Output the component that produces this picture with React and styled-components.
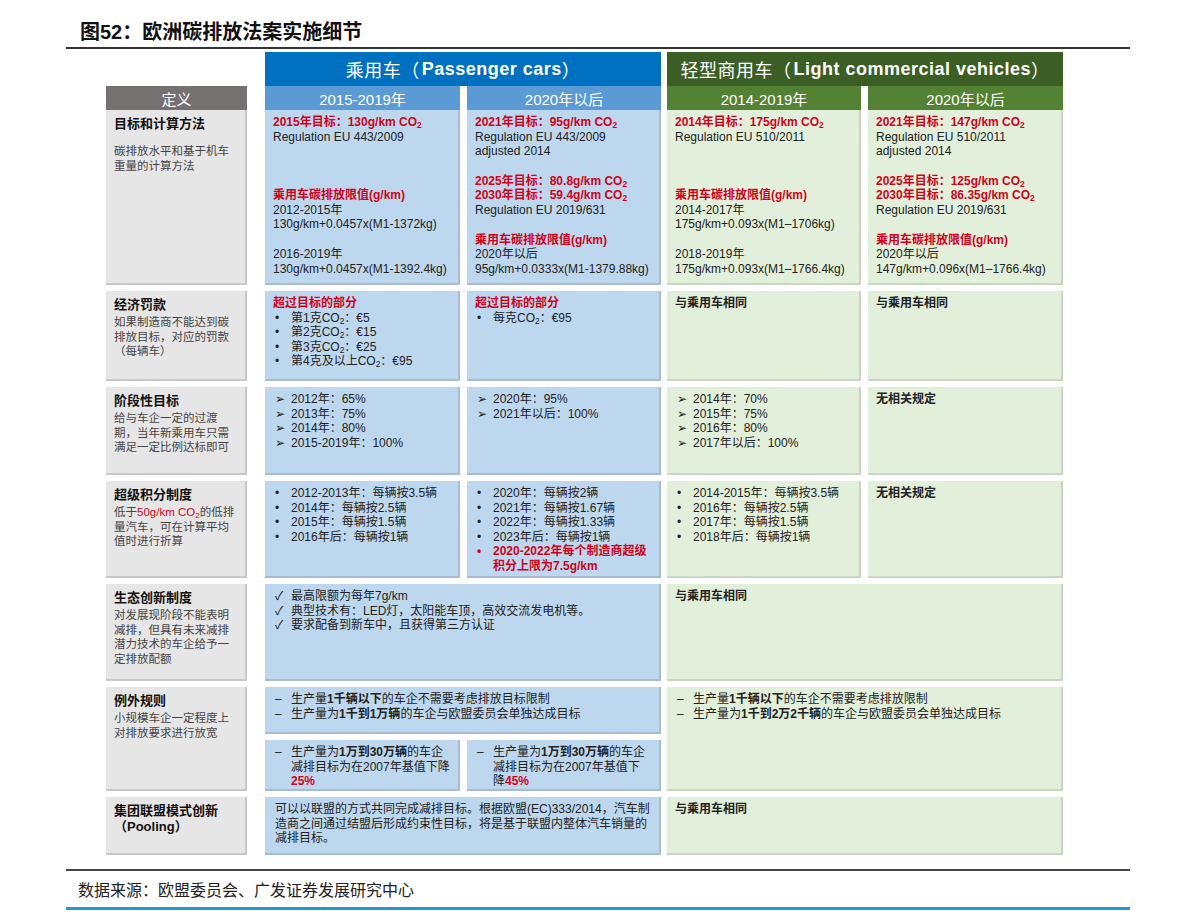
import React from "react";
import styled, { createGlobalStyle } from "styled-components";

const Global = createGlobalStyle`
  body { margin: 0; background: #fff; font-family: "Liberation Sans", "Noto Sans CJK SC", sans-serif; color: #222; }
  sub { font-size: 0.7em; vertical-align: -0.25em; line-height: 0; }
`;

const Page = styled.div`
  width: 1191px; height: 920px; overflow: hidden; position: relative;
`;
const Title = styled.h1`
  margin: 0; padding: 16px 0 0 80px; height: 31px; font-size: 20px; font-weight: bold; color: #111;
  font-family: "Liberation Sans", "Noto Sans CJK SC", sans-serif;
`;
const Rule = styled.div`
  margin: 0 61px 0 66px; height: 2px; background: #333;
`;
const cols = `141px 18px 195px 7px 194px 6px 194px 7px 195px`;
const HeadGrid = styled.div`
  display: grid; margin: 3px 0 0 106px; grid-template-columns: ${cols};
  grid-template-rows: 34px 24px;
`;
const BodyGrid = styled.div`
  display: grid; margin: 0 0 0 106px; grid-template-columns: ${cols};
  grid-template-rows: 175px 90px 88px 97px 97px 47px 51px 58px; row-gap: 6px;
`;
const BigHead = styled.div`
  grid-row: 1; grid-column: ${p => p.$col};
  background: ${p => p.$c}; color: #fff; font-size: 18px;
  display: flex; align-items: center; justify-content: center; letter-spacing: 0.5px;
  b { font-weight: bold; margin-left: 2px; }
`;
const SubHead = styled.div`
  grid-row: 2; grid-column: ${p => p.$col};
  background: ${p => p.$c}; color: #fff; font-size: 15px;
  display: flex; align-items: center; justify-content: center;
`;
const Cell = styled.div`
  grid-row: ${p => p.$row}; grid-column: ${p => p.$col};
  background: ${p => (p.$g ? "#e2efda" : "#bdd7ee")};
  border-right: 2px solid ${p => (p.$g ? "#c9d6c2" : "#a7bcd0")};
  border-bottom: 2px solid ${p => (p.$g ? "#c9d6c2" : "#a7bcd0")};
  padding: 5px 8px 5px ${p => p.$pl || 8}px; font-size: 12px; line-height: 14.6px; box-sizing: border-box;
`;
const Label = styled.div`
  grid-row: ${p => p.$row}; grid-column: 1;
  background: #e7e6e6; border-right: 2px solid #c8c8c8; border-bottom: 2px solid #c8c8c8;
  padding: 6px 8px; font-size: 11.5px; line-height: 14.6px; color: #444; box-sizing: border-box;
`;
const LabelTitle = styled.div`
  font-size: 13px; font-weight: bold; color: #111; margin-bottom: 2px; line-height: 16px;
`;
const Red = styled.span`color: #d0021b; font-weight: ${p => (p.$n ? "normal" : "bold")};`;
const Line = styled.div`min-height: 14.6px;`;
const Gap = styled.div`height: ${p => p.$h}px;`;
const List = styled.ul`margin: 0; padding: 0; list-style: none;`;
const ItemRow = styled.li`
  display: flex; color: ${p => (p.$red ? "#d0021b" : "inherit")}; font-weight: ${p => (p.$red ? "bold" : "normal")};
`;
const Marker = styled.span`width: 16px; flex: none; padding-left: 2px;`;
const ItemText = styled.span`flex: 1; min-width: 0;`;
const Item = ({ m, red, children }) => (
  <ItemRow $red={red}><Marker>{m}</Marker><ItemText>{children}</ItemText></ItemRow>
);
const Footer = styled.div`
  margin: 14px 61px 0 66px; border-top: 2px solid #444; padding: 6px 0 0 12px; font-size: 16px; height: 30px;
`;
const Blue = styled.div`margin: 0 61px 0 66px; height: 3px; background: #1a9ad6;`;

const CO = () => <>CO<sub>2</sub></>;

export default function App() {
  return (
    <Page>
      <Global />
      <Title>图52：欧洲碳排放法案实施细节</Title>
      <Rule />
      <HeadGrid>
        <BigHead $col="3 / 6" $c="#0070c0">乘用车（<b>Passenger cars</b>）</BigHead>
        <BigHead $col="7 / 10" $c="#3b5e24">轻型商用车（<b>Light commercial vehicles</b>）</BigHead>
        <SubHead $col="1" $c="#767171">定义</SubHead>
        <SubHead $col="3" $c="#5b9bd5">2015-2019年</SubHead>
        <SubHead $col="5" $c="#5b9bd5">2020年以后</SubHead>
        <SubHead $col="7" $c="#548235">2014-2019年</SubHead>
        <SubHead $col="9" $c="#548235">2020年以后</SubHead>
      </HeadGrid>
      <BodyGrid>
        <Label $row={1}><LabelTitle>目标和计算方法</LabelTitle><Gap $h={10} />碳排放水平和基于机车重量的计算方法</Label>
        <Cell $row={1} $col={3}>
          <Line><Red>2015年目标：130g/km <CO /></Red></Line>
          <Line>Regulation EU 443/2009</Line>
          <Gap $h={44} />
          <Line><Red>乘用车碳排放限值(g/km)</Red></Line>
          <Line>2012-2015年</Line>
          <Line>130g/km+0.0457x(M1-1372kg)</Line>
          <Gap $h={15} />
          <Line>2016-2019年</Line>
          <Line>130g/km+0.0457x(M1-1392.4kg)</Line>
        </Cell>
        <Cell $row={1} $col={5}>
          <Line><Red>2021年目标：95g/km <CO /></Red></Line>
          <Line>Regulation EU 443/2009</Line>
          <Line>adjusted 2014</Line>
          <Gap $h={15} />
          <Line><Red>2025年目标：80.8g/km <CO /></Red></Line>
          <Line><Red>2030年目标：59.4g/km <CO /></Red></Line>
          <Line>Regulation EU 2019/631</Line>
          <Gap $h={15} />
          <Line><Red>乘用车碳排放限值(g/km)</Red></Line>
          <Line>2020年以后</Line>
          <Line>95g/km+0.0333x(M1-1379.88kg)</Line>
        </Cell>
        <Cell $row={1} $col={7} $g>
          <Line><Red>2014年目标：175g/km <CO /></Red></Line>
          <Line>Regulation EU 510/2011</Line>
          <Gap $h={44} />
          <Line><Red>乘用车碳排放限值(g/km)</Red></Line>
          <Line>2014-2017年</Line>
          <Line>175g/km+0.093x(M1–1706kg)</Line>
          <Gap $h={15} />
          <Line>2018-2019年</Line>
          <Line>175g/km+0.093x(M1–1766.4kg)</Line>
        </Cell>
        <Cell $row={1} $col={9} $g>
          <Line><Red>2021年目标：147g/km <CO /></Red></Line>
          <Line>Regulation EU 510/2011</Line>
          <Line>adjusted 2014</Line>
          <Gap $h={15} />
          <Line><Red>2025年目标：125g/km <CO /></Red></Line>
          <Line><Red>2030年目标：86.35g/km <CO /></Red></Line>
          <Line>Regulation EU 2019/631</Line>
          <Gap $h={15} />
          <Line><Red>乘用车碳排放限值(g/km)</Red></Line>
          <Line>2020年以后</Line>
          <Line>147g/km+0.096x(M1–1766.4kg)</Line>
        </Cell>

        <Label $row={2}><LabelTitle>经济罚款</LabelTitle>如果制造商不能达到碳排放目标，对应的罚款（每辆车）</Label>
        <Cell $row={2} $col={3}>
          <Line><Red>超过目标的部分</Red></Line>
          <List>
            <Item m="•">第1克<CO />：€5</Item>
            <Item m="•">第2克<CO />：€15</Item>
            <Item m="•">第3克<CO />：€25</Item>
            <Item m="•">第4克及以上<CO />：€95</Item>
          </List>
        </Cell>
        <Cell $row={2} $col={5}>
          <Line><Red>超过目标的部分</Red></Line>
          <List><Item m="•">每克<CO />：€95</Item></List>
        </Cell>
        <Cell $row={2} $col={7} $g><b>与乘用车相同</b></Cell>
        <Cell $row={2} $col={9} $g><b>与乘用车相同</b></Cell>

        <Label $row={3}><LabelTitle>阶段性目标</LabelTitle>给与车企一定的过渡期，当年新乘用车只需满足一定比例达标即可</Label>
        <Cell $row={3} $col={3}>
          <List>
            <Item m="➢">2012年：65%</Item>
            <Item m="➢">2013年：75%</Item>
            <Item m="➢">2014年：80%</Item>
            <Item m="➢">2015-2019年：100%</Item>
          </List>
        </Cell>
        <Cell $row={3} $col={5}>
          <List>
            <Item m="➢">2020年：95%</Item>
            <Item m="➢">2021年以后：100%</Item>
          </List>
        </Cell>
        <Cell $row={3} $col={7} $g>
          <List>
            <Item m="➢">2014年：70%</Item>
            <Item m="➢">2015年：75%</Item>
            <Item m="➢">2016年：80%</Item>
            <Item m="➢">2017年以后：100%</Item>
          </List>
        </Cell>
        <Cell $row={3} $col={9} $g><b>无相关规定</b></Cell>

        <Label $row={4}><LabelTitle>超级积分制度</LabelTitle>低于<Red $n>50g/km CO<sub>2</sub></Red>的低排量汽车，可在计算平均值时进行折算</Label>
        <Cell $row={4} $col={3}>
          <List>
            <Item m="•">2012-2013年：每辆按3.5辆</Item>
            <Item m="•">2014年：每辆按2.5辆</Item>
            <Item m="•">2015年：每辆按1.5辆</Item>
            <Item m="•">2016年后：每辆按1辆</Item>
          </List>
        </Cell>
        <Cell $row={4} $col={5}>
          <List>
            <Item m="•">2020年：每辆按2辆</Item>
            <Item m="•">2021年：每辆按1.67辆</Item>
            <Item m="•">2022年：每辆按1.33辆</Item>
            <Item m="•">2023年后：每辆按1辆</Item>
            <Item m="•" red>2020-2022年每个制造商超级积分上限为7.5g/km</Item>
          </List>
        </Cell>
        <Cell $row={4} $col={7} $g>
          <List>
            <Item m="•">2014-2015年：每辆按3.5辆</Item>
            <Item m="•">2016年：每辆按2.5辆</Item>
            <Item m="•">2017年：每辆按1.5辆</Item>
            <Item m="•">2018年后：每辆按1辆</Item>
          </List>
        </Cell>
        <Cell $row={4} $col={9} $g><b>无相关规定</b></Cell>

        <Label $row={5}><LabelTitle>生态创新制度</LabelTitle>对发展现阶段不能表明减排，但具有未来减排潜力技术的车企给予一定排放配额</Label>
        <Cell $row={5} $col="3 / 6">
          <List>
            <Item m="✓">最高限额为每年7g/km</Item>
            <Item m="✓">典型技术有：LED灯，太阳能车顶，高效交流发电机等。</Item>
            <Item m="✓">要求配备到新车中，且获得第三方认证</Item>
          </List>
        </Cell>
        <Cell $row={5} $col="7 / 10" $g><b>与乘用车相同</b></Cell>

        <Label $row="6 / 8"><LabelTitle>例外规则</LabelTitle>小规模车企一定程度上对排放要求进行放宽</Label>
        <Cell $row={6} $col="3 / 6">
          <List>
            <Item m="–">生产量<b>1千辆以下</b>的车企不需要考虑排放目标限制</Item>
            <Item m="–">生产量为<b>1千到1万辆</b>的车企与欧盟委员会单独达成目标</Item>
          </List>
        </Cell>
        <Cell $row={7} $col={3}>
          <List><Item m="–">生产量为<b>1万到30万辆</b>的车企减排目标为在2007年基值下降<Red>25%</Red></Item></List>
        </Cell>
        <Cell $row={7} $col={5}>
          <List><Item m="–">生产量为<b>1万到30万辆</b>的车企减排目标为在2007年基值下降<Red>45%</Red></Item></List>
        </Cell>
        <Cell $row="6 / 8" $col="7 / 10" $g>
          <List>
            <Item m="–">生产量<b>1千辆以下</b>的车企不需要考虑排放限制</Item>
            <Item m="–">生产量为<b>1千到2万2千辆</b>的车企与欧盟委员会单独达成目标</Item>
          </List>
        </Cell>

        <Label $row={8}><LabelTitle>集团联盟模式创新（Pooling）</LabelTitle></Label>
        <Cell $row={8} $col="3 / 6" $pl={10}>
          可以以联盟的方式共同完成减排目标。根据欧盟(EC)333/2014，汽车制造商之间通过结盟后形成约束性目标，将是基于联盟内整体汽车销量的减排目标。
        </Cell>
        <Cell $row={8} $col="7 / 10" $g><b>与乘用车相同</b></Cell>
      </BodyGrid>
      <Footer>数据来源：欧盟委员会、广发证券发展研究中心</Footer>
      <Blue />
    </Page>
  );
}
